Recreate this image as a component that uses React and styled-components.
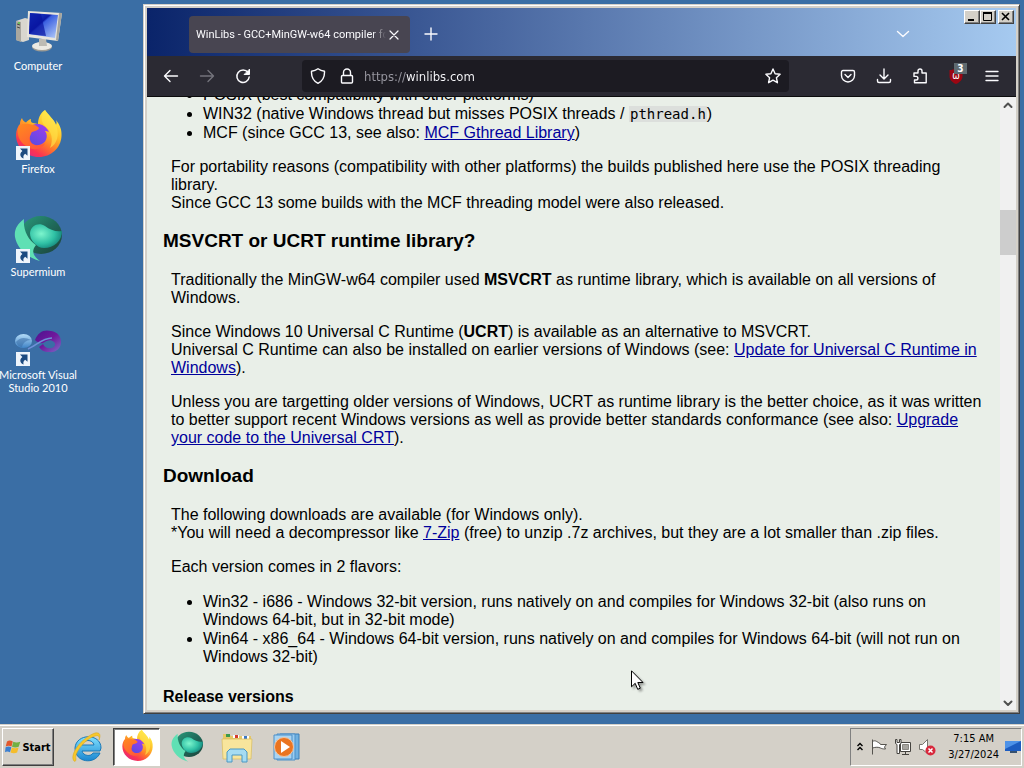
import styled, { createGlobalStyle } from 'styled-components'

const GlobalStyle = createGlobalStyle`
  * { box-sizing: border-box; }
  body {
    margin: 0;
    background: #3a6ea5;
    font-family: "DejaVu Sans Condensed", "DejaVu Sans", sans-serif;
    font-size: 11px;
  }
  button { font: inherit; color: inherit; padding: 0; }
`

const Screen = styled.div`
  display: flex;
  flex-direction: column;
  height: 100vh;
  overflow: hidden;
`
const Desktop = styled.main`
  flex: 1;
  min-height: 0;
  display: flex;
  padding: 4px 4px 10px 0;
`
const IconColumn = styled.nav`
  flex: 0 0 143px;
  padding-top: 5px;
`
const Shortcut = styled.a`
  display: flex;
  flex-direction: column;
  align-items: center;
  gap: 2px;
  width: 76px;
  min-height: 103px;
  color: #fff;
  font-family: Lato, sans-serif;
  line-height: 13px;
  text-align: center;
  text-decoration: none;
  white-space: nowrap;
`
const IconBox = styled.span`
  position: relative;
  width: 48px;
  height: 48px;
  svg { display: block; overflow: visible; }
`
const Badge = styled.svg`
  position: absolute;
  left: 2px;
  bottom: 0;
`

const Window = styled.section`
  flex: 1;
  min-width: 0;
  display: flex;
  flex-direction: column;
  border: 1px solid;
  border-color: #d4d0c8 #404040 #404040 #d4d0c8;
  box-shadow: inset 1px 1px #fff, inset -1px -1px #808080;
  background: #d4d0c8;
  padding: 3px;
`
const TitleBar = styled.header`
  flex: 0 0 48px;
  display: flex;
  align-items: flex-start;
  padding: 2px 2px 0 42px;
  background: linear-gradient(90deg, #0a246a, #a6caf0);
`
const Tab = styled.div`
  display: flex;
  align-items: center;
  width: 221px;
  height: 37px;
  margin-top: 6px;
  padding: 0 8px 0 7px;
  border-radius: 4px;
  background: #484551;
  color: #fbfbfe;
  font-family: Roboto, sans-serif;
`
const TabTitle = styled.span`
  flex: 1;
  overflow: hidden;
  white-space: nowrap;
  mask-image: linear-gradient(90deg, #000 calc(100% - 14px), transparent);
`
const PlainButton = styled.button`
  display: flex;
  align-items: center;
  justify-content: center;
  width: ${props => props.$w || 36}px;
  height: ${props => props.$h || 32}px;
  border: 0;
  background: none;
  color: #fbfbfe;
`
const TitleButton = styled(PlainButton)`
  margin: 8px ${props => props.$right || 0}px 0 3px;
`
const Spacer = styled.div`
  flex: ${props => props.$grow || 1};
`
const Controls = styled.div`
  display: flex;
`
const ControlButton = styled.button`
  width: 16px;
  height: 14px;
  margin-left: ${props => props.$gap || 0}px;
  border: 1px solid;
  border-color: #fff #404040 #404040 #fff;
  box-shadow: inset -1px -1px #808080;
  background: #d4d0c8;
  svg { display: block; }
`

const Toolbar = styled.div`
  flex: 0 0 41px;
  display: flex;
  align-items: center;
  padding: 0 6px;
  border-bottom: 1px solid #0c0c0d;
  background: #2b2a33;
`
const UrlBar = styled.div`
  flex: 1;
  min-width: 0;
  display: flex;
  align-items: center;
  height: 32px;
  margin: 0 41px;
  border-radius: 4px;
  background: #1c1b22;
`
/* the scheme is dimmed, the host is bright */
const UrlInput = styled.input`
  flex: 1;
  min-width: 0;
  margin-left: 4px;
  padding: 0;
  border: 0;
  outline: none;
  background: linear-gradient(90deg, #9a99a2 42px, #fbfbfe 42px);
  background-clip: text;
  color: transparent;
  font: inherit;
  font-size: 13px;
`
const Ublock = styled.span`
  position: relative;
  display: flex;
`
const Count = styled.span`
  position: absolute;
  left: 6px;
  top: -5px;
  width: 13px;
  height: 11px;
  background: #5f6a70;
  color: #fff;
  font-size: 10px;
  font-weight: bold;
  line-height: 11px;
  text-align: center;
`

const Viewport = styled.div`
  flex: 1;
  min-height: 0;
  display: flex;
  background: #e9efe8;
`
const Article = styled.article`
  flex: 1;
  min-width: 0;
  display: flex;
  flex-direction: column;
  justify-content: flex-end;
  overflow: hidden;
  padding: 0 16px 4px;
  color: #000;
  font-family: "Liberation Sans", Arial, sans-serif;
  font-size: 16px;
  line-height: 18px;
  h2 { margin: 18px 0 19px; font-size: 19px; line-height: 22px; }
  h3 { margin: 22px 0 0; font-size: 16px; line-height: 18px; }
  p { margin: 0 0 16px 8px; }
  p:has(+ h2) { margin-bottom: 0; }
  p:has(+ ul) { margin-bottom: 17px; }
  ul { margin: 0 0 16px; padding-left: 40px; }
  ul:has(+ h3) { margin-bottom: 0; }
  li + li { margin-top: 1px; }
  a { color: #00009c; }
  code {
    padding: 0 1px;
    background: #dcdfdc;
    font-family: "DejaVu Sans Mono", monospace;
    font-size: 14px;
  }
`
const ScrollBar = styled.div`
  flex: 0 0 16px;
  display: flex;
  flex-direction: column;
  background: #f0f0f0;
`
const ScrollButton = styled(PlainButton)`
  color: #505050;
`
const Thumb = styled.div`
  height: 45px;
  background: #cdcdcd;
`

const Taskbar = styled.footer`
  flex: 0 0 44px;
  display: flex;
  padding: 2px;
  border-top: 1px solid #d4d0c8;
  box-shadow: inset 0 1px #fff;
  background: #d4d0c8;
`
const StartButton = styled.button`
  display: flex;
  align-items: center;
  justify-content: center;
  gap: 1px;
  width: 52px;
  margin: 1px 9px 0 0;
  border: 1px solid;
  border-color: #fff #404040 #404040 #fff;
  box-shadow: inset -1px -1px #808080;
  background: #d4d0c8;
  font-weight: bold;
`
const Tasks = styled.div`
  flex: 1;
  display: flex;
  gap: 3px;
`
const TaskButton = styled.button`
  display: flex;
  align-items: center;
  justify-content: center;
  width: 47px;
  margin-top: 1px;
  border: 1px solid;
  border-color: ${props => props.$active ? '#404040 #fff #fff #404040' : 'transparent'};
  box-shadow: ${props => props.$active ? 'inset 1px 1px #808080' : 'none'};
  background: ${props => props.$active ? '#fff' : 'none'};
  svg { overflow: visible; }
`
const Tray = styled.div`
  display: flex;
  align-items: center;
  gap: 6px;
  margin-top: 1px;
  padding-left: 5px;
  border: 1px solid;
  border-color: #808080 #fff #fff #808080;
`
const Clock = styled.time`
  margin-left: 6px;
  line-height: 16px;
  text-align: center;
`
const Cursor = styled.svg`
  position: absolute;
  left: 631px;
  top: 670px;
  filter: drop-shadow(2px 2px 1px rgba(0, 0, 0, 0.35));
`

function Line({ d, size = 16, width = 1.4, color = 'currentColor' }) {
  return (
    <svg width={size} height={size} viewBox="0 0 16 16" fill="none" stroke={color}
      strokeWidth={width} strokeLinecap="round" strokeLinejoin="round">
      <path d={d} />
    </svg>
  )
}

function ShortcutArrow() {
  return (
    <Badge width="14" height="14" viewBox="0 0 14 14">
      <path d="M0 0h14v14H0z" fill="#eef4fb" />
      <path d="M4 2.500h7.500v7.200L9.200 7.700C7.300 9 7 10.500 7.700 12.500 4 11 3 7.500 6.400 4.900z" fill="#1c4a80" />
    </Badge>
  )
}

function ComputerIcon() {
  return (
    <svg width="48" height="48" viewBox="0 0 48 48">
      <defs>
        <linearGradient id="pcScreen" x1="0" y1="0" x2="1" y2="1">
          <stop offset="0" stopColor="#1f4fd8" />
          <stop offset=".4" stopColor="#0a1ba8" />
          <stop offset=".45" stopColor="#3a5fe0" />
          <stop offset="1" stopColor="#b8d0fa" />
        </linearGradient>
      </defs>
      <path d="M2 12l9-3 4 1v21l-6 2-7-2z" fill="#d9d7cf" />
      <path d="M2 12l5 1v20l-5-2z" fill="#a9a79f" />
      <path d="M3 15l3 1M3 18l3 1" stroke="#4b4a46" />
      <circle cx="5" cy="14" r="1" fill="#58c440" />
      <ellipse cx="28" cy="38" rx="10" ry="4.500" fill="#9d9b94" />
      <ellipse cx="28" cy="37" rx="10" ry="4" fill="#eceae3" />
      <path d="M25 30h7l1 7h-8z" fill="#bdbbb3" />
      <path d="M14 2l34 2-4 28-31-4z" fill="#e8e6de" />
      <path d="M45 4l3 0-4 28-2-1z" fill="#a7a59d" />
      <path d="M16 4l28 2-3 23-26-4z" fill="url(#pcScreen)" />
      <path d="M16 4l11 1 5 22-17-2z" fill="#0814a0" opacity=".7" />
    </svg>
  )
}

function FirefoxIcon({ size = 48, id }) {
  return (
    <svg width={size} height={size} viewBox="0 0 48 48">
      <defs>
        <linearGradient id={id + 'Body'} x1=".8" y1=".1" x2=".25" y2=".95">
          <stop offset="0" stopColor="#fff04a" />
          <stop offset=".35" stopColor="#ffbd27" />
          <stop offset=".6" stopColor="#ff7a2a" />
          <stop offset=".85" stopColor="#fb3550" />
          <stop offset="1" stopColor="#e62a78" />
        </linearGradient>
        <linearGradient id={id + 'Globe'} x1=".8" y1="0" x2=".2" y2="1">
          <stop offset="0" stopColor="#a03cf0" />
          <stop offset="1" stopColor="#5a4be0" />
        </linearGradient>
        <linearGradient id={id + 'Head'} x1="0" y1="0" x2=".6" y2="1">
          <stop offset="0" stopColor="#ff8a1e" />
          <stop offset="1" stopColor="#ff5a38" />
        </linearGradient>
      </defs>
      <path d="M31-2C34 3 40 7 42 13 43 11 42.500 9 42 8 46 13 48 18 47.500 24 47 36 37 45 25 45 12 45 2 35 2 23 2 18 4 14 6 12 6 10 6.500 8 8 6 8.500 8 10 10 12 10.500 13 9 15 7.500 17 7 16.500 9 17 10.500 19 11L24 12C24 7 26 1 31-2z" fill={`url(#${id}Body)`} />
      <path d="M17 14c6-4 14-2 18 6-2-1-3-1-4-1 4 5 1 13-6 14-7 1-10-4-9-9z" fill={`url(#${id}Globe)`} />
      <path d="M4 17c2-4 5-6 8-5 3-1 5 1 8 1 2 0 4 2 5 3-1 3-5 3-7 4-1 1-1 2-2 4-2 2-1 6 2 8 4 3 9 2 13-1-3 7-13 8-19 3-6-4-9-10-8-17z" fill={`url(#${id}Head)`} />
      <path d="M31-2C34 3 40 7 42 13 46 23 43 32 36 36 40 27 37 19 32 15 27 11 26 4 31-2z" fill="#ffe24a" opacity=".65" />
    </svg>
  )
}

function SupermiumIcon({ size = 48, id }) {
  return (
    <svg width={size} height={size} viewBox="0 0 48 48">
      <defs>
        <radialGradient id={id + 'Ball'} cx=".35" cy=".4" r=".7">
          <stop offset="0" stopColor="#7df5cd" />
          <stop offset=".6" stopColor="#2fc0a4" />
          <stop offset="1" stopColor="#128078" />
        </radialGradient>
        <linearGradient id={id + 'Back'} x1="0" y1="0" x2="1" y2="1">
          <stop offset="0" stopColor="#2b9c7c" />
          <stop offset=".5" stopColor="#1f6a5a" />
          <stop offset="1" stopColor="#1d4038" />
        </linearGradient>
      </defs>
      <ellipse cx="27" cy="20" rx="21" ry="19" fill={`url(#${id}Back)`} />
      <path d="M10 4C3 9 0 15 1 22c2 11 11 20 25 24-7-5-9-10-4-16C14 25 9 15 10 4z" fill="#5fe0b4" />
      <path d="M16 18C17 10 25 7 31 11 36 15 42 17 48 16 48 26 40 33 30 33 26 33 23 31 20 28 17 25 16 21 16 18z" fill={`url(#${id}Ball)`} />
    </svg>
  )
}

function VisualStudioIcon() {
  return (
    <svg width="48" height="48" viewBox="0 0 48 48">
      <defs>
        <linearGradient id="vsLeft" x1="0" y1="0" x2="0" y2="1">
          <stop offset="0" stopColor="#b4dcf8" />
          <stop offset="1" stopColor="#3f83c6" />
        </linearGradient>
        <linearGradient id="vsRight" x1="0" y1="0" x2="1" y2="1">
          <stop offset="0" stopColor="#4a1490" />
          <stop offset=".5" stopColor="#70189c" />
          <stop offset="1" stopColor="#7b6cc8" />
        </linearGradient>
      </defs>
      <ellipse cx="9.500" cy="23" rx="8.500" ry="7" fill="url(#vsLeft)" />
      <path d="M2 24c4-5 9-5 15-2-5 0-8 3-9 7-3 0-5-2-6-5z" fill="#3a6ea5" opacity=".55" />
      <path d="M21 22C24 14 30 11 37 13c7 1 10 6 10 11 0 7-6 11-12 10-5 0-8-2-10-5l4-3c2 4 5 5 9 4 3-1 4-4 2-6-3-3-7-2-11 1-3 1-6-1-8-3z" fill="url(#vsRight)" />
      <path d="M14 31c8-3 14-11 24-11" fill="none" stroke="#6f90d8" strokeWidth="1.500" />
    </svg>
  )
}

function ExplorerEIcon() {
  return (
    <svg width="32" height="32" viewBox="0 0 32 32">
      <defs>
        <linearGradient id="ieBlue" x1="0" y1="0" x2="0" y2="1">
          <stop offset="0" stopColor="#7fe0ff" />
          <stop offset="1" stopColor="#1b86d0" />
        </linearGradient>
      </defs>
      <path d="M29 20H11c1 5 9 6 11 2h7c-5 12-25 10-25-5C5 2 30 2 30 17zM11 14h12c-1-6-11-6-12 0z" fill="url(#ieBlue)" stroke="#1878b8" />
      <path d="M3 30C-2 24 10 7 24 2c5-1 6 2 4 7 1-4-1-5-4-4C14 8 3 22 5 28c0 2-1 3-2 2z" fill="#f6c72c" stroke="#d9a417" strokeWidth=".5" />
    </svg>
  )
}

function FolderIcon() {
  return (
    <svg width="32" height="32" viewBox="0 0 32 32">
      <path d="M2 3h6l2 2h20v22H2z" fill="#e5c868" />
      <path d="M5 3h4v3H5z" fill="#3a9a4c" />
      <path d="M12 4h6v3h-6z" fill="#fff" />
      <path d="M14 4h3v3h-3z" fill="#d43b2f" />
      <path d="M21 5h7v3h-7z" fill="#fff" />
      <path d="M23 5h3v3h-3z" fill="#3a78c8" />
      <path d="M1 8h30l-1 20H2z" fill="#f8e59c" stroke="#d9bb5c" strokeWidth=".7" />
      <path d="M6 31V21l3-3h14l3 3v10h-5v-7H11v7z" fill="#a5dcf2" stroke="#4b98c4" />
    </svg>
  )
}

function MediaIcon() {
  return (
    <svg width="32" height="32" viewBox="0 0 32 32">
      <path d="M9 3h19v25H9z" fill="#6fb0e0" stroke="#3c7fb8" />
      <path d="M6 3h18v26H6z" fill="#9ccdf0" stroke="#4c8fc8" />
      <path d="M3 4h18v24H3z" fill="#a9d4f2" stroke="#4c8fc8" />
      <circle cx="13" cy="16" r="9.500" fill="#ea7420" stroke="#f6c29a" />
      <path d="M10 10l9 6-9 6z" fill="#fff" />
    </svg>
  )
}

function StartFlag() {
  return (
    <svg width="16" height="16" viewBox="0 0 16 16">
      <path d="M2 2.500c2-1.500 4-1 5.800 0L6.500 7.600c-2-1-3.800-1-5.800 0z" fill="#e2582c" />
      <path d="M8.300 2.800c2 1 4.500 1 7 0l-1.600 5c-2 1-4.700 1-6.700 0z" fill="#72b043" />
      <path d="M.6 8.200c2-1 3.800-1 5.800 0L5 13.300c-2-1-3.700-1-5 0z" fill="#3b7fd0" />
      <path d="M6.900 8.500c2 1 4.500 1 6.700 0l-1.500 5c-2 1-4.500 1-6.600 0z" fill="#f5bd2c" />
    </svg>
  )
}

function UblockIcon() {
  return (
    <Ublock>
      <svg width="16" height="16" viewBox="0 0 16 16">
        <path d="M8 0c2 1.500 4 2 6.500 2v6c0 4-3 6.500-6.500 8C4.500 14.500 1.500 12 1.500 8V2C4 2 6 1.500 8 0z" fill="#9c0612" />
        <text x="8" y="11" fill="#fff" fontSize="10" textAnchor="middle">ω</text>
      </svg>
      <Count>3</Count>
    </Ublock>
  )
}

function TrayIcons() {
  return (
    <>
      <svg width="8" height="10" viewBox="0 0 8 10" fill="none" stroke="#000" strokeWidth="1.400">
        <path d="M1.500 4L4 1.500 6.500 4M1.500 8L4 5.500 6.500 8" />
      </svg>
      <svg width="18" height="18" viewBox="0 0 18 18" fill="#fff" stroke="#55534e">
        <path d="M2.500 1.500v15M2.500 3.500c3-2 5 1 7 1.500l1 1.500h6l-2 2.500 1 2c-3 0-4-.5-5-1-2-1-5-1-8 0" />
      </svg>
      <svg width="18" height="18" viewBox="0 0 18 18" fill="#fff" stroke="#45433f">
        <path d="M6.500 4.500h10v9h-10z" />
        <path d="M8.500 6.500h6v5h-6z" fill="#a7a5a0" stroke="#8a8882" />
        <path d="M8 16.500h7M11.500 14v2" />
        <path d="M1.500 1.500v4l1.500 1v9h2.500v-9l1.500-1v-4h-1.500v3h-2.500v-3z" />
      </svg>
      <svg width="18" height="18" viewBox="0 0 18 18">
        <path d="M1.500 6.500h3l5-5v14l-5-4h-3z" fill="#fff" stroke="#77756f" />
        <circle cx="12.500" cy="12.500" r="5" fill="#d8283c" />
        <path d="M10.500 10.500l4 4M14.500 10.500l-4 4" stroke="#fff" strokeWidth="1.500" />
      </svg>
    </>
  )
}

function Page() {
  return (
    <Article>
      <ul>
        <li>POSIX (best compatibility with other platforms)</li>
        <li>WIN32 (native Windows thread but misses POSIX threads / <code>pthread.h</code>)</li>
        <li>MCF (since GCC 13, see also: <a href="#mcf">MCF Gthread Library</a>)</li>
      </ul>
      <p>
        For portability reasons (compatibility with other platforms) the builds published here use the POSIX threading library.<br />
        Since GCC 13 some builds with the MCF threading model were also released.
      </p>
      <h2>MSVCRT or UCRT runtime library?</h2>
      <p>
        Traditionally the MinGW-w64 compiler used <b>MSVCRT</b> as runtime library, which is available on all versions of Windows.
      </p>
      <p>
        Since Windows 10 Universal C Runtime (<b>UCRT</b>) is available as an alternative to MSVCRT.<br />
        Universal C Runtime can also be installed on earlier versions of Windows (see: <a href="#ucrt">Update for Universal C Runtime in Windows</a>).
      </p>
      <p>
        Unless you are targetting older versions of Windows, UCRT as runtime library is the better choice, as it was written to better support recent Windows versions as well as provide better standards conformance (see also: <a href="#upgrade">Upgrade your code to the Universal CRT</a>).
      </p>
      <h2>Download</h2>
      <p>
        The following downloads are available (for Windows only).<br />
        *You will need a decompressor like <a href="#7zip">7-Zip</a> (free) to unzip .7z archives, but they are a lot smaller than .zip files.
      </p>
      <p>Each version comes in 2 flavors:</p>
      <ul>
        <li>Win32 - i686 - Windows 32-bit version, runs natively on and compiles for Windows 32-bit (also runs on Windows 64-bit, but in 32-bit mode)</li>
        <li>Win64 - x86_64 - Windows 64-bit version, runs natively on and compiles for Windows 64-bit (will not run on Windows 32-bit)</li>
      </ul>
      <h3>Release versions</h3>
    </Article>
  )
}

function Browser() {
  return (
    <Window>
      <TitleBar>
        <Tab>
          <TabTitle>WinLibs - GCC+MinGW-w64 compiler for Windows</TabTitle>
          <PlainButton $w={16} $h={16} aria-label="Close tab"><Line d="M4 4l8 8M12 4l-8 8" width={1.2} /></PlainButton>
        </Tab>
        <TitleButton aria-label="New tab"><Line d="M8 2v12M2 8h12" /></TitleButton>
        <Spacer />
        <TitleButton $right={43} aria-label="List all tabs"><Line d="M2.500 5.500L8 10.500l5.500-5" /></TitleButton>
        <Controls>
          <ControlButton aria-label="Minimize">
            <svg width="13" height="12"><path d="M3 8h6v2H3z" /></svg>
          </ControlButton>
          <ControlButton aria-label="Maximize">
            <svg width="13" height="12"><path d="M2.500 1v8.500h8V1" fill="none" stroke="#000" /><path d="M2 1h9v2H2z" /></svg>
          </ControlButton>
          <ControlButton $gap={2} aria-label="Close">
            <svg width="13" height="12"><path d="M3 2l7 7M10 2l-7 7" stroke="#000" strokeWidth="1.600" /></svg>
          </ControlButton>
        </Controls>
      </TitleBar>
      <Toolbar>
        <PlainButton aria-label="Back"><Line d="M14.500 8H1.500M7 2.500L1.500 8 7 13.500" /></PlainButton>
        <PlainButton aria-label="Forward"><Line d="M1.500 8h13M9 2.500L14.500 8 9 13.500" color="#74737c" /></PlainButton>
        <PlainButton aria-label="Reload">
          <svg width="16" height="16" viewBox="0 0 16 16" fill="none" stroke="currentColor" strokeWidth="1.500" strokeLinecap="round">
            <path d="M13 4.500A6.200 6.200 0 1 0 14.200 9" />
            <path d="M14.500 1.500v5h-5z" fill="currentColor" strokeWidth="1" strokeLinejoin="round" />
          </svg>
        </PlainButton>
        <UrlBar>
          <PlainButton $w={32} aria-label="Tracking protection">
            <Line d="M8 .8c2 1.500 4 2.200 6.500 2.400C14.800 9 12.500 13 8 15.300 3.500 13 1.200 9 1.500 3.200 4 3 6 2.300 8 .8z" />
          </PlainButton>
          <PlainButton $w={26} aria-label="Connection secure">
            <Line d="M4.500 7V4.500a3.500 3.500 0 0 1 7 0V7M3.500 7.500h9a1 1 0 0 1 1 1v5.500a1 1 0 0 1-1 1h-9a1 1 0 0 1-1-1V8.500a1 1 0 0 1 1-1z" />
          </PlainButton>
          <UrlInput aria-label="Address" defaultValue="https://winlibs.com" />
          <PlainButton $w={32} aria-label="Bookmark">
            <Line d="M8 1l2.100 4.700 5 .6-3.700 3.400 1 5L8 12.200 3.600 14.700l1-5L.9 6.300l5-.6z" />
          </PlainButton>
        </UrlBar>
        <PlainButton aria-label="Pocket">
          <Line d="M3 2.500h10a1.500 1.500 0 0 1 1.500 1.500v3.500a6.500 6.500 0 0 1-13 0V4A1.500 1.500 0 0 1 3 2.500zM5 6.500l3 3 3-3" />
        </PlainButton>
        <PlainButton aria-label="Downloads"><Line d="M8 1v9.500M4 7l4 4 4-4M1.500 11.500v1.500a1.500 1.500 0 0 0 1.500 1.500h10a1.500 1.500 0 0 0 1.500-1.500v-1.500" /></PlainButton>
        <PlainButton aria-label="Extensions">
          <Line d="M2 5h4V3a2 2 0 0 1 4 0v2h4.200v9.800H2.500V12h1.600a1.800 1.800 0 0 0 0-3.600H2z" />
        </PlainButton>
        <PlainButton aria-label="uBlock Origin"><UblockIcon /></PlainButton>
        <PlainButton aria-label="Menu"><Line d="M2 3.500h12M2 8h12M2 12.500h12" /></PlainButton>
      </Toolbar>
      <Viewport>
        <Page />
        <ScrollBar>
          <ScrollButton $w={16} $h={15} aria-label="Scroll up"><Line d="M4.500 10L8 6.500 11.500 10" width={2} /></ScrollButton>
          <Spacer $grow={98} />
          <Thumb />
          <Spacer $grow={440} />
          <ScrollButton $w={16} $h={15} aria-label="Scroll down"><Line d="M4.500 6.500L8 10l3.500-3.500" width={2} /></ScrollButton>
        </ScrollBar>
      </Viewport>
    </Window>
  )
}

export default function App() {
  return (
    <Screen>
      <GlobalStyle />
      <Desktop>
        <IconColumn>
          <Shortcut href="#computer"><IconBox><ComputerIcon /></IconBox>Computer</Shortcut>
          <Shortcut href="#firefox"><IconBox><FirefoxIcon id="deskFox" /><ShortcutArrow /></IconBox>Firefox</Shortcut>
          <Shortcut href="#supermium"><IconBox><SupermiumIcon id="deskSm" /><ShortcutArrow /></IconBox>Supermium</Shortcut>
          <Shortcut href="#vs">
            <IconBox><VisualStudioIcon /><ShortcutArrow /></IconBox>
            <span>Microsoft Visual<br />Studio 2010</span>
          </Shortcut>
        </IconColumn>
        <Browser />
      </Desktop>
      <Taskbar>
        <StartButton><StartFlag />Start</StartButton>
        <Tasks>
          <TaskButton aria-label="Internet Explorer"><ExplorerEIcon /></TaskButton>
          <TaskButton $active aria-label="Firefox"><FirefoxIcon size={32} id="taskFox" /></TaskButton>
          <TaskButton aria-label="Supermium"><SupermiumIcon size={32} id="taskSm" /></TaskButton>
          <TaskButton aria-label="Windows Explorer"><FolderIcon /></TaskButton>
          <TaskButton aria-label="Media Player"><MediaIcon /></TaskButton>
        </Tasks>
        <Tray>
          <TrayIcons />
          <Clock>7:15 AM<br />3/27/2024</Clock>
          <svg width="16" height="16" viewBox="0 0 16 16">
            <path d="M0 2h16v10H0z" fill="#1c5cc0" />
            <path d="M0 2h16L0 10z" fill="#4d92e8" />
            <path d="M5 12h7v2H5z" fill="#35506e" />
          </svg>
        </Tray>
      </Taskbar>
      <Cursor width="13" height="21" viewBox="0 0 13 21">
        <path d="M.5 .8v16l3.700-3.500 2.500 6 2.600-1.100-2.500-5.700H12z" fill="#fff" stroke="#000" />
      </Cursor>
    </Screen>
  )
}
